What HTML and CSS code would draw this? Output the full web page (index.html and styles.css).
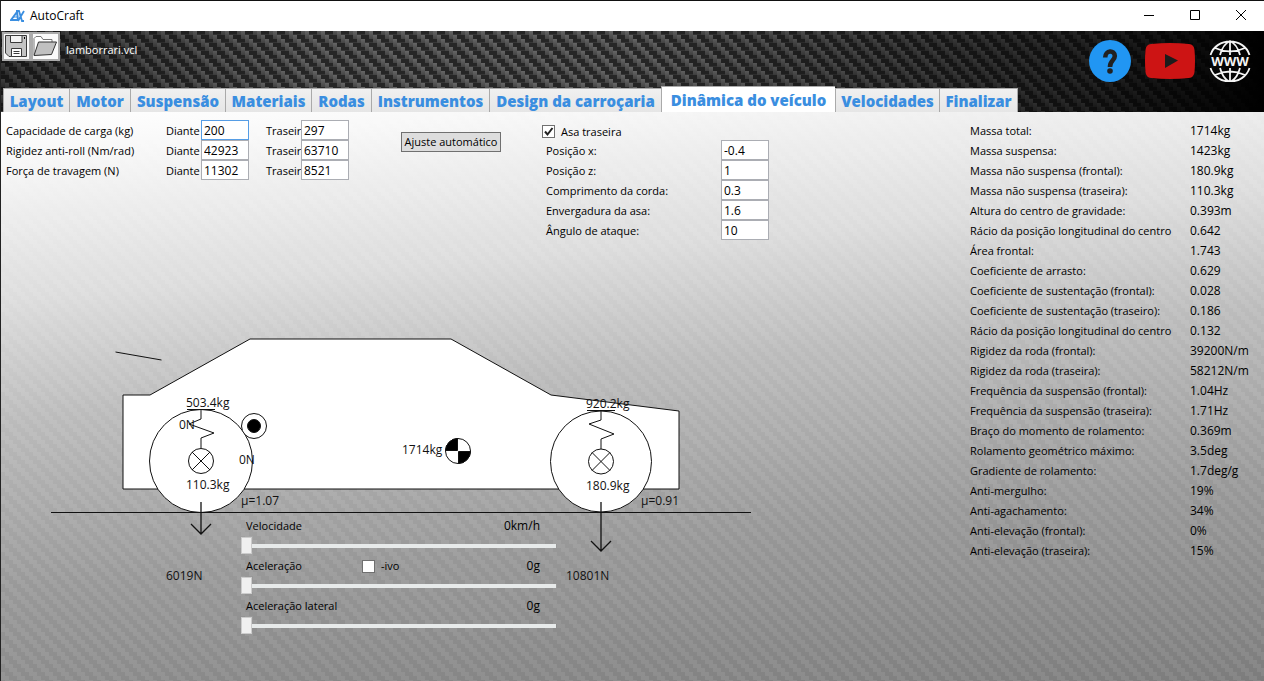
FILE: index.html
```html
<!DOCTYPE html>
<html lang="pt">
<head>
<meta charset="utf-8">
<title>AutoCraft</title>
<link rel="stylesheet" href="styles.css">
</head>
<body>
<div class="window">
  <div class="titlebar">
    <svg class="app-icon" width="15" height="12" viewBox="0 0 15 12" fill="none" stroke="#3a8ee0" stroke-width="2"><path d="M1 10H8L7 2Z"/><path d="M3 7H7" stroke-width="1"/><path d="M6 1H9L12 11H14M14 1L8 11" stroke-width="1.8"/></svg>
    <span class="app-name">AutoCraft</span>
    <div class="window-buttons">
      <button type="button" aria-label="Minimizar"><svg width="12" height="12" viewBox="0 0 12 12" stroke="#000" fill="none"><path d="M1 5.500H11"/></svg></button>
      <button type="button" aria-label="Maximizar"><svg width="12" height="12" viewBox="0 0 12 12" stroke="#000" fill="none"><path d="M1.500 .5H10.500V9.500H1.500Z"/></svg></button>
      <button type="button" aria-label="Fechar"><svg width="12" height="12" viewBox="0 0 12 12" stroke="#000" fill="none"><path d="M1 0L11 10M11 0L1 10"/></svg></button>
    </div>
  </div>

  <header class="header">
    <div class="toolbar">
      <button type="button" class="tool" aria-label="Guardar"><svg width="25" height="25" viewBox="0 0 25 25"><path d="M1.500 1.500H22.500V22.500H5L1.500 19Z" fill="#c4c4c4" stroke="#3a3a3a"/><path d="M6.500 1.500H18V8.500H6.500Z" fill="#f4f4f4" stroke="#3a3a3a"/><path d="M7.500 14.500H17.500V22.500H7.500Z" fill="#fff" stroke="#3a3a3a"/><path d="M9.500 17.500H15.500M9.500 19.500H15.500" stroke="#3a3a3a"/><path d="M20.500 3v2" stroke="#000"/></svg></button>
      <button type="button" class="tool" aria-label="Abrir"><svg width="25" height="25" viewBox="0 0 25 25"><path d="M1 21V4.500L3 2.500H8L10 5.500H19V8" fill="#fff" stroke="#777"/><path d="M1 21.500L5.500 8H23.500L18.500 20.500Z" fill="#c0c0c0" stroke="#333"/></svg></button>
      <span class="filename">lamborrari.vcl</span>
      <nav class="links" aria-label="Ajuda">
        <a href="#ajuda" aria-label="Ajuda"><svg width="42" height="42" viewBox="0 0 42 42"><circle cx="21" cy="21" r="21" fill="#2196f3"/><path d="M16.200 17.600C16.200 9.800 25.800 9.800 25.800 16C25.800 20.500 21 20.200 21 27" fill="none" stroke="#212121" stroke-width="4.600"/><circle cx="21" cy="31" r="2.800" fill="#212121"/></svg></a>
        <a href="#videos" aria-label="Vídeos"><svg width="50" height="36" viewBox="0 0 50 36"><path d="M6 1Q25 -1 44 1Q49 1.500 49.500 7Q50.500 18 49.500 29Q49 34.500 44 35Q25 37 6 35Q1 34.500 .5 29Q-.5 18 .5 7Q1 1.500 6 1Z" fill="#cd1414"/><path d="M20 11L33 17.500L20 25Z" fill="#1c1c1c"/></svg></a>
        <a href="#web" aria-label="Página web"><svg width="42" height="42" viewBox="0 0 42 42" fill="none" stroke="#f4f4f4" stroke-width="1.800"><path d="M1.500 15C7-3 35-3 40.500 15M1.500 28C7 46 35 46 40.500 28M21 1V15M21 28V42M11 15Q14 4 21 1Q28 4 31 15M11 28Q14 39 21 42Q28 39 31 28M6 8Q21 15 36 8M6 35Q21 28 36 35"/><text class="www" x="21" y="26" text-anchor="middle">WWW</text></svg></a>
      </nav>
    </div>
    <nav class="tabs" aria-label="Secções">
      <button type="button">Layout</button>
      <button type="button">Motor</button>
      <button type="button">Suspensão</button>
      <button type="button">Materiais</button>
      <button type="button">Rodas</button>
      <button type="button">Instrumentos</button>
      <button type="button">Design da carroçaria</button>
      <button type="button" class="active">Dinâmica do veículo</button>
      <button type="button">Velocidades</button>
      <button type="button">Finalizar</button>
    </nav>
  </header>

  <main class="panel">
    <section class="workspace">
      <div class="forms">
        <div class="axle-form">
          <span>Capacidade de carga (kg)</span><label for="c1">Diante</label><input id="c1" class="focused" value="200"><label for="c2" class="rear">Traseir</label><input id="c2" value="297">
          <span>Rigidez anti-roll (Nm/rad)</span><label for="r1">Diante</label><input id="r1" value="42923"><label for="r2" class="rear">Traseir</label><input id="r2" value="63710">
          <span>Força de travagem (N)</span><label for="f1">Diante</label><input id="f1" value="11302"><label for="f2" class="rear">Traseir</label><input id="f2" value="8521">
        </div>
        <button type="button" class="auto">Ajuste automático</button>
        <div class="wing-form">
          <label class="check"><input type="checkbox" checked>Asa traseira</label>
          <label for="px">Posição x:</label><input id="px" value="-0.4">
          <label for="pz">Posição z:</label><input id="pz" value="1">
          <label for="cc">Comprimento da corda:</label><input id="cc" value="0.3">
          <label for="ea">Envergadura da asa:</label><input id="ea" value="1.6">
          <label for="aa">Ângulo de ataque:</label><input id="aa" value="10">
        </div>
      </div>

      <div class="stage">
        <svg class="diagram" width="759" height="400" viewBox="1 240 759 400" fill="none" stroke="#111">
          <path d="M115.500 352L161.500 360"/>
          <path d="M123 395H150L250 339H451L551 395L679 411V489H123Z" fill="#fff"/>
          <circle cx="201" cy="461" r="51.500" fill="#fff"/>
          <circle cx="601" cy="461.500" r="50.500" fill="#fff"/>
          <path d="M51 512.500H751"/>
          <path d="M187 409.500H215M201 409V419L189 424L214 433L201 438V448"/>
          <path d="M587 410.500H615M601 410V420L589 424L614 434L601 439V449"/>
          <circle cx="201" cy="461" r="12.500"/><path d="M192 452L210 470M210 452L192 470"/>
          <circle cx="601" cy="461.500" r="12.500"/><path d="M592 452.500L610 470.500M610 452.500L592 470.500"/>
          <path d="M201 502V534M191 524L201 534L211 524" stroke-width="1.300"/>
          <path d="M601 502V551M591 541L601 551L611 541" stroke-width="1.300"/>
          <circle cx="254" cy="426" r="12.500" fill="#fff"/><circle cx="254" cy="426" r="6.500" fill="#000"/>
          <circle cx="458" cy="451" r="12.500" fill="#fff"/>
          <path d="M457.500 450.500V438.500A12.500 12.500 0 0 0 445.500 450.500ZM458.500 451.500V463.500A12.500 12.500 0 0 0 470.500 451.500Z" fill="#000"/>
          <g class="diagram-text">
            <text x="186" y="407">503.4kg</text><text x="179" y="429">0N</text><text x="239" y="464">0N</text>
            <text x="186" y="489">110.3kg</text><text x="241" y="505">µ=1.07</text><text x="166" y="580">6019N</text>
            <text x="402" y="454">1714kg</text><text x="586" y="408">920.2kg</text><text x="586" y="490">180.9kg</text>
            <text x="641" y="505">µ=0.91</text><text x="566" y="580">10801N</text>
          </g>
        </svg>
        <div class="sliders">
          <div class="row"><label for="s1">Velocidade</label><output>0km/h</output></div>
          <input id="s1" type="range" value="0">
          <div class="row"><label for="s2">Aceleração</label><label class="sign"><input type="checkbox">-ivo</label><output>0g</output></div>
          <input id="s2" type="range" value="0">
          <div class="row"><label for="s3">Aceleração lateral</label><output>0g</output></div>
          <input id="s3" type="range" value="0">
        </div>
      </div>
    </section>

    <table class="stats">
      <tr><th>Massa total:</th><td>1714kg</td></tr>
      <tr><th>Massa suspensa:</th><td>1423kg</td></tr>
      <tr><th>Massa não suspensa (frontal):</th><td>180.9kg</td></tr>
      <tr><th>Massa não suspensa (traseira):</th><td>110.3kg</td></tr>
      <tr><th>Altura do centro de gravidade:</th><td>0.393m</td></tr>
      <tr><th>Rácio da posição longitudinal do centro</th><td>0.642</td></tr>
      <tr><th>Área frontal:</th><td>1.743</td></tr>
      <tr><th>Coeficiente de arrasto:</th><td>0.629</td></tr>
      <tr><th>Coeficiente de sustentação (frontal):</th><td>0.028</td></tr>
      <tr><th>Coeficiente de sustentação (traseiro):</th><td>0.186</td></tr>
      <tr><th>Rácio da posição longitudinal do centro</th><td>0.132</td></tr>
      <tr><th>Rigidez da roda (frontal):</th><td>39200N/m</td></tr>
      <tr><th>Rigidez da roda (traseira):</th><td>58212N/m</td></tr>
      <tr><th>Frequência da suspensão (frontal):</th><td>1.04Hz</td></tr>
      <tr><th>Frequência da suspensão (traseira):</th><td>1.71Hz</td></tr>
      <tr><th>Braço do momento de rolamento:</th><td>0.369m</td></tr>
      <tr><th>Rolamento geométrico máximo:</th><td>3.5deg</td></tr>
      <tr><th>Gradiente de rolamento:</th><td>1.7deg/g</td></tr>
      <tr><th>Anti-mergulho:</th><td>19%</td></tr>
      <tr><th>Anti-agachamento:</th><td>34%</td></tr>
      <tr><th>Anti-elevação (frontal):</th><td>0%</td></tr>
      <tr><th>Anti-elevação (traseira):</th><td>15%</td></tr>
    </table>
  </main>
</div>
</body>
</html>
```
FILE: styles.css
```css
* { box-sizing: border-box; }
body, button, input { font-family: "Open Sans", "Noto Sans", sans-serif; font-size: 12px; color: #000; }
body { margin: 0; }
button { cursor: pointer; }

.window {
  min-height: 100vh;
  display: flex;
  flex-direction: column;
  border-top: 1px solid #111;
  border-left: 1px solid #222;
}

.titlebar { display: flex; align-items: center; height: 30px; padding-left: 9px; background: #fff; }
.app-name { margin-left: 5px; line-height: 16px; }
.window-buttons { display: flex; margin-left: auto; }
.window-buttons button { width: 46px; height: 30px; padding: 0; border: 0; background: none; }
.window-buttons svg { display: block; margin: 0 auto; }

.header {
  background-color: #262626;
  background-image:
    linear-gradient(to right, rgba(0,0,0,.4), rgba(0,0,0,0) 25%, rgba(0,0,0,0) 50%, rgba(0,0,0,.6) 85%, #000 100%),
    url("data:image/svg+xml,%3Csvg xmlns='http://www.w3.org/2000/svg' width='16' height='16'%3E%3ClinearGradient id='g' x2='0' y2='1'%3E%3Cstop stop-color='%23666'/%3E%3Cstop offset='1' stop-color='%23444'/%3E%3C/linearGradient%3E%3Cpath d='M0 3.500H16M0 11.500H16' stroke='%23363636'/%3E%3Cg fill='url(%23g)'%3E%3Crect width='4' height='8'/%3E%3Crect x='4' y='4' width='4' height='8'/%3E%3Crect x='8' y='8' width='4' height='8'/%3E%3Crect x='12' y='12' width='4' height='8'/%3E%3Crect x='12' y='-4' width='4' height='8'/%3E%3C/g%3E%3C/svg%3E");
}
.toolbar { display: flex; align-items: flex-start; height: 55px; padding: 1px 13px 0 1px; }
.tool { width: 29px; height: 29px; padding: 0; border: 2px solid #aaa; background: #fafafa; }
.tool svg { display: block; }
.filename { margin: 10px 0 0 6px; line-height: 16px; font-size: 11px; color: #fff; }
.links { display: flex; align-items: center; gap: 14px; margin: 8px 0 0 auto; }
.links a, .links svg { display: block; }
.www { font: bold 13px "Open Sans", sans-serif; fill: #f4f4f4; stroke: none; }

.tabs {
  display: grid;
  grid-template-columns: 66px 61px 95px 86px 60px 118px 172px 174px 104px 79px;
  align-items: end;
  height: 26px;
  padding-left: 2px;
}
.tabs button {
  height: 25px;
  padding: 0;
  border: 1px solid #aaa;
  border-right-width: 0;
  border-bottom-color: #ddd;
  background: linear-gradient(#f0f0f0, #e6e6e6);
  color: #3a8ee0;
  font-size: 15px;
  font-weight: 800;
  line-height: 22px;
  white-space: nowrap;
}
.tabs button:last-child { border-right-width: 1px; }
.tabs .active { height: 27px; background: #fff; border-bottom-color: #fff; }

.panel {
  flex: 1;
  display: flex;
  justify-content: space-between;
  background-image:
    url("data:image/svg+xml,%3Csvg xmlns='http://www.w3.org/2000/svg' width='16' height='16'%3E%3Cpath d='M0 0h4v8h-4zM4 4h4v8h-4zM8 8h4v8h-4zM12 12h4v4h-4zM12 0h4v4h-4z' fill='%23fff' fill-opacity='.08'/%3E%3C/svg%3E"),
    linear-gradient(175deg, #fff 0%, #fafafa 5%, #dcdcdc 28%, #bcbcbc 45%, #999 70%, #7c7c7c 100%);
}
.workspace { padding: 8px 0 0; }
.forms { display: flex; align-items: flex-start; height: 120px; padding-left: 5px; line-height: 20px; white-space: nowrap; }
.axle-form { display: grid; grid-template-columns: 160px 35px 48px 52px 48px; grid-auto-rows: 20px; }
.axle-form .rear { padding-left: 17px; }
.axle-form span, .axle-form label, .wing-form label { padding-top: 1px; font-size: 11px; }
.forms input:not([type]) {
  width: 48px;
  height: 20px;
  padding: 0 2px;
  border: 1px solid #abadb3;
  background: #fff;
}
.forms .focused:not([type]) { border-color: #569de5; }
.auto { width: 100px; height: 20px; margin: 12px 41px 0 52px; padding: 0; border: 1px solid #707070; background: #ddd; font-size: 11px; line-height: 18px; }
.wing-form { display: grid; grid-template-columns: 179px 48px; grid-auto-rows: 20px; }
.wing-form label { padding-left: 4px; }
.wing-form .check { grid-column: 1 / -1; display: flex; align-items: center; gap: 6px; padding: 3px 0 0; }

input[type="checkbox"] {
  appearance: none;
  width: 13px;
  height: 13px;
  margin: 0;
  border: 1px solid #707070;
  background: #fff;
}
input[type="checkbox"]:checked {
  background: #fff url("data:image/svg+xml,%3Csvg xmlns='http://www.w3.org/2000/svg' width='11' height='11'%3E%3Cpath d='M2 5.500L4.500 8.500L9.500 2' fill='none' stroke='%23212121' stroke-width='2'/%3E%3C/svg%3E");
}

.stage { display: grid; }
.diagram, .sliders { grid-area: 1 / 1; }
.diagram { display: block; }
.diagram-text { fill: #111; stroke: none; }
.sliders { width: 315px; margin: 276px 0 0 240px; line-height: 20px; }
.row { display: flex; height: 20px; padding: 0 16px 0 5px; }
.row label { font-size: 11px; }
.row output { margin-left: auto; }
.row .sign { display: flex; align-items: center; gap: 6px; margin-left: 60px; }
.sliders input[type="range"] { appearance: none; display: block; width: 100%; height: 20px; margin: 0; background: none; }
.sliders input[type="range"]::-webkit-slider-runnable-track { height: 4px; background: #e7eaea; }
.sliders input[type="range"]::-webkit-slider-thumb { appearance: none; width: 11px; height: 17px; margin-top: -7px; border: 1px solid #ccc; background: #f0f0f0; }

.stats { align-self: flex-start; width: 294px; margin-top: 9px; border-collapse: collapse; table-layout: fixed; white-space: nowrap; }
.stats th { width: 220px; height: 20px; padding: 0; font-size: 11px; font-weight: 400; text-align: left; line-height: 20px; }
.stats td { padding: 0; line-height: 20px; }
```
